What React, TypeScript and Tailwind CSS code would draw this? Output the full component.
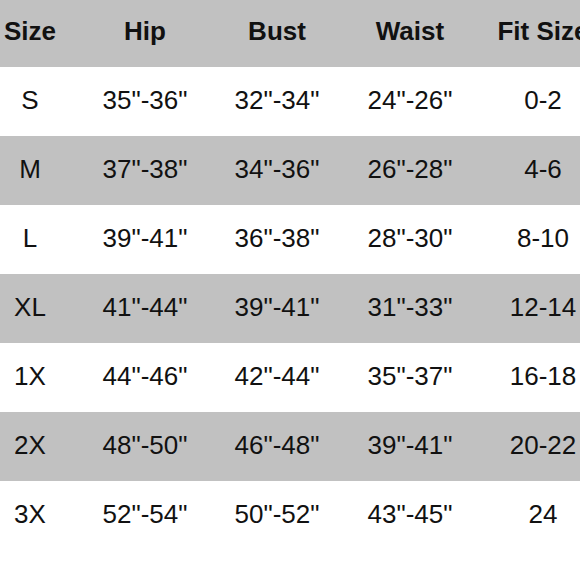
import React from 'react';

const rows = [
  ['S', '35"-36"', '32"-34"', '24"-26"', '0-2'],
  ['M', '37"-38"', '34"-36"', '26"-28"', '4-6'],
  ['L', '39"-41"', '36"-38"', '28"-30"', '8-10'],
  ['XL', '41"-44"', '39"-41"', '31"-33"', '12-14'],
  ['1X', '44"-46"', '42"-44"', '35"-37"', '16-18'],
  ['2X', '48"-50"', '46"-48"', '39"-41"', '20-22'],
  ['3X', '52"-54"', '50"-52"', '43"-45"', '24'],
];

const headers = ['Size', 'Hip', 'Bust', 'Waist', 'Fit Size'];

export default function App() {
  return (
    <div className="w-[580px] h-[580px] overflow-hidden bg-white text-[#111] font-['Liberation_Sans',Arial,sans-serif] text-[26px]">
      <div className="w-[590px]">
        {/* Header */}
        <div className="grid grid-cols-[60px_170px_94px_172px_94px] h-[67px] items-center pb-[4px] bg-[#c1c1c1] font-bold">
          {headers.map((h) => (
            <div key={h} className="text-center whitespace-nowrap">
              {h}
            </div>
          ))}
        </div>

        {/* Body rows */}
        {rows.map((row, i) => (
          <div
            key={row[0]}
            className={`grid grid-cols-[60px_170px_94px_172px_94px] h-[69px] items-center pb-[3px] ${
              i % 2 === 1 ? 'bg-[#c1c1c1]' : 'bg-white'
            }`}
          >
            {row.map((cell, j) => (
              <div key={j} className="text-center whitespace-nowrap">
                {cell}
              </div>
            ))}
          </div>
        ))}
      </div>
    </div>
  );
}
